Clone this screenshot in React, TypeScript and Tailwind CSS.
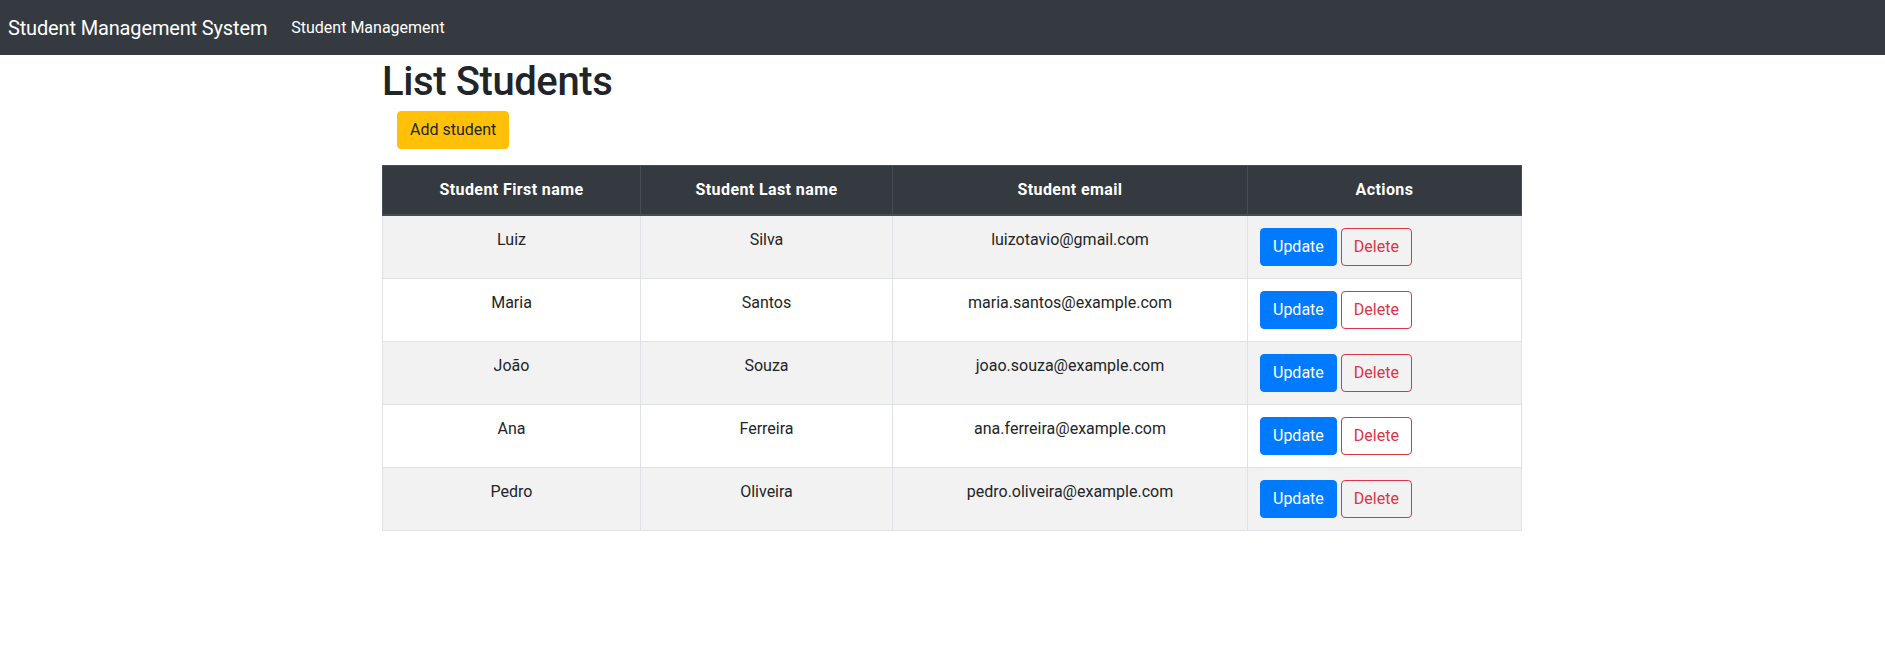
import React from 'react';

interface Student {
  id: number;
  firstName: string;
  lastName: string;
  email: string;
}

const students: Student[] = [
  { id: 1, firstName: 'Luiz', lastName: 'Silva', email: 'luizotavio@gmail.com' },
  { id: 2, firstName: 'Maria', lastName: 'Santos', email: 'maria.santos@example.com' },
  { id: 3, firstName: 'João', lastName: 'Souza', email: 'joao.souza@example.com' },
  { id: 4, firstName: 'Ana', lastName: 'Ferreira', email: 'ana.ferreira@example.com' },
  { id: 5, firstName: 'Pedro', lastName: 'Oliveira', email: 'pedro.oliveira@example.com' },
];

const Header: React.FC = () => (
  <nav className="bg-[#343a40] h-[55px] flex items-center px-2">
    <span className="text-white text-[20px] leading-[30px] mr-4 tracking-[-0.15px]">Student Management System</span>
    <a className="text-white text-[16px] leading-6 px-2">Student Management</a>
  </nav>
);

const thClass = 'px-3 py-3 border border-[#454d55] border-b-2 text-center font-bold text-white tracking-[0.4px]';
const tdClass = 'px-3 py-3 border border-[#dee2e6] text-center align-top';

const StudentList: React.FC = () => (
  <div className="w-[1140px] ml-[382px]">
    <h1 className="text-[40px] font-medium leading-[1.2] pt-[3px] mb-[5px] text-[#212529] tracking-[-0.4px]">List Students</h1>
    <button className="ml-[15px] bg-[#ffc107] text-[#212529] rounded-[4px] px-3 py-[6px] leading-6 border border-[#ffc107]">
      Add student
    </button>
    <table className="w-full mt-4 border-collapse text-[#212529]">
      <thead className="bg-[#343a40]">
        <tr>
          <th className={`${thClass} w-[258px]`}>Student First name</th>
          <th className={`${thClass} w-[252px]`}>Student Last name</th>
          <th className={`${thClass} w-[355px]`}>Student email</th>
          <th className={thClass}>Actions</th>
        </tr>
      </thead>
      <tbody>
        {students.map((s, i) => (
          <tr key={s.id} className={i % 2 === 0 ? 'bg-[#f2f2f2]' : 'bg-white'}>
            <td className={tdClass}>{s.firstName}</td>
            <td className={tdClass}>{s.lastName}</td>
            <td className={tdClass}>{s.email}</td>
            <td className="px-3 py-3 border border-[#dee2e6] text-left align-top">
              <div className="flex gap-1">
                <button className="bg-[#007bff] border border-[#007bff] text-white rounded-[4px] px-3 py-[6px] leading-6">
                  Update
                </button>
                <button className="bg-transparent border border-[#dc3545] text-[#dc3545] rounded-[4px] px-3 py-[6px] leading-6">
                  Delete
                </button>
              </div>
            </td>
          </tr>
        ))}
      </tbody>
    </table>
  </div>
);

export default function App() {
  return (
    <div className="min-h-[656px] bg-white text-[16px] leading-6" style={{ fontFamily: 'Roboto, "Noto Sans", sans-serif' }}>
      <Header />
      <StudentList />
    </div>
  );
}
